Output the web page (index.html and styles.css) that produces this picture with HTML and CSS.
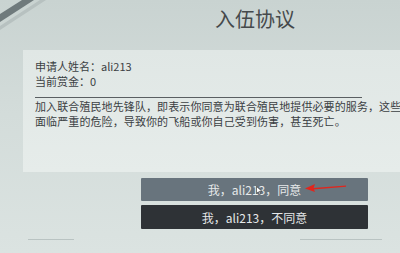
FILE: index.html
```html
<!DOCTYPE html>
<html lang="zh-CN">
<head>
  <meta charset="UTF-8">
  <meta name="viewport" content="width=device-width, initial-scale=1.0">
  <title>入伍协议</title>
  <link rel="stylesheet" href="styles.css">
</head>
<body>
  <div class="screen">
    <svg class="corner" width="60" height="40" viewBox="0 0 60 40">
      <polygon points="0,14 22,0 34,0 0,22" fill="#6f7a7c"/>
      <polygon points="0,26 40,0 46,0 0,30" fill="#b7c1c0"/>
    </svg>

    <header class="top">
      <h1 class="title">入伍协议</h1>
    </header>

    <section class="panel">
      <div class="info">
        <div>申请人姓名：ali213</div>
        <div>当前赏金：0</div>
      </div>
      <p class="terms">加入联合殖民地先锋队，即表示你同意为联合殖民地提供必要的服务，这些服务可能使你<br>面临严重的危险，导致你的飞船或你自己受到伤害，甚至死亡。</p>
    </section>

    <div class="actions">
      <button class="btn btn-agree">我，ali213，同意
        <svg class="cursor" width="7" height="9" viewBox="0 0 7 9">
          <path d="M0.5 0.5 L0.5 7.5 L2.3 5.8 L3.6 8.5 L4.6 8 L3.4 5.4 L6 5.3 Z" fill="#fff" stroke="#333" stroke-width="0.6"/>
        </svg>
      </button>
      <button class="btn btn-decline">我，ali213，不同意</button>
    </div>

    <svg class="arrow" width="42" height="10" viewBox="0 0 42 10">
      <path d="M8 5 L41 2.6 L41 3.8 L8 6.4 Z" fill="#e0261d"/>
      <path d="M0 5.4 L10 1 L8.5 5.2 L10 9 Z" fill="#e0261d"/>
    </svg>

    <div class="deco deco-left"></div>
    <div class="deco deco-right"></div>
  </div>
</body>
</html>
```

FILE: styles.css
```css
html, body {
  margin: 0;
  padding: 0;
}

body {
  font-family: "Noto Sans CJK SC", "Noto Sans", sans-serif;
  color: #3b4043;
}

.screen {
  position: relative;
  width: 400px;
  height: 253px;
  overflow: hidden;
  background: linear-gradient(180deg, #c9d3d1 0%, #d3dcda 45%, #dbe3e1 100%);
}

.corner {
  position: absolute;
  top: 0;
  left: 0;
}

.top {
  height: 50px;
  padding-left: 110px;
  box-sizing: border-box;
}

.title {
  margin: 0;
  padding-top: 6px;
  text-align: center;
  font-size: 20px;
  font-weight: normal;
  line-height: 26px;
  color: #45494b;
}

.panel {
  margin-left: 23px;
  height: 122px;
  box-sizing: border-box;
  padding: 9px 0 0 12px;
  background: linear-gradient(180deg, #e0e7e5 0%, #e6ecea 100%);
  overflow: hidden;
}

.info {
  width: 327px;
  font-size: 11px;
  line-height: 15px;
  padding-bottom: 8px;
  border-bottom: 1px solid #5a5f62;
}

.terms {
  margin: 1px 0 0;
  width: 420px;
  white-space: nowrap;
  font-size: 11px;
  line-height: 15px;
  letter-spacing: 0.1px;
}

.actions {
  display: flex;
  flex-direction: column;
  gap: 4px;
  width: 227px;
  margin: 6px 0 0 141px;
}

.btn {
  position: relative;
  height: 23px;
  border: none;
  border-radius: 1px;
  font-family: inherit;
  font-size: 12px;
  color: #e6e9ea;
  padding: 0;
}

.btn-agree {
  background: #68747d;
}

.btn-decline {
  height: 24px;
  background: #2e3236;
}

.cursor {
  position: absolute;
  left: 115px;
  top: 8px;
}

.arrow {
  position: absolute;
  left: 305px;
  top: 183px;
}

.deco {
  position: absolute;
  height: 1px;
  background: #b9c3c2;
}

.deco-left {
  left: 28px;
  top: 239px;
  width: 46px;
}

.deco-right {
  left: 300px;
  top: 239px;
  width: 82px;
}
```
